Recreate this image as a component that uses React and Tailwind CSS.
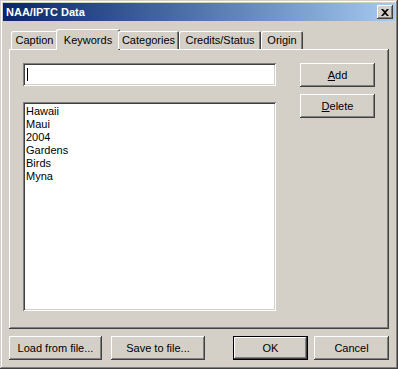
import React, { useState } from 'react';

const raised =
  'shadow-[inset_-1px_-1px_#404040,inset_1px_1px_#ffffff,inset_-2px_-2px_#808080,inset_2px_2px_#d4d0c8]';
const sunken =
  'shadow-[inset_1px_1px_#808080,inset_-1px_-1px_#ffffff,inset_2px_2px_#404040,inset_-2px_-2px_#d4d0c8]';

function Button({ children, className = '', isDefault = false }) {
  return (
    <button
      className={`h-[24px] w-[75px] bg-[#d4d0c8] text-[11px] text-black flex items-center justify-center ${
        isDefault
          ? 'border border-black shadow-[inset_-1px_-1px_#404040,inset_1px_1px_#ffffff,inset_-2px_-2px_#808080,inset_2px_2px_#d4d0c8]'
          : raised
      } ${className}`}
    >
      {children}
    </button>
  );
}

const tabs = [
  { name: 'Caption', w: 'w-[47px]' },
  { name: 'Keywords', w: 'w-[64px]' },
  { name: 'Categories', w: 'w-[61px]' },
  { name: 'Credits/Status', w: 'w-[82px]' },
  { name: 'Origin', w: 'w-[42px]' },
];

export default function App() {
  const [active] = useState('Keywords');
  const keywords = ['Hawaii', 'Maui', '2004', 'Gardens', 'Birds', 'Myna'];

  return (
    <div
      className="w-[398px] h-[369px] bg-[#d4d0c8] p-[3px] flex flex-col text-black shadow-[inset_-1px_-1px_#404040,inset_1px_1px_#d4d0c8,inset_-2px_-2px_#808080,inset_2px_2px_#ffffff]"
      style={{ fontFamily: '"Liberation Sans", Arial, sans-serif' }}
    >
      {/* title bar */}
      <div className="h-[18px] flex items-center justify-between pl-[3px] pr-[2px] bg-gradient-to-r from-[#0a246a] to-[#a6caf0]">
        <span className="text-[11px] font-bold text-white">NAA/IPTC Data</span>
        <button className={`w-[16px] h-[14px] bg-[#d4d0c8] flex items-center justify-center ${raised}`}>
          <svg width="8" height="7" viewBox="0 0 8 7">
            <path d="M0 0h2l2 2 2-2h2L5 3.5 8 7H6L4 5 2 7H0l3-3.5z" fill="#000" />
          </svg>
        </button>
      </div>

      {/* tabs */}
      <div className="mt-[8px] ml-[6px] mr-[6px] flex flex-col">
        <div className="flex items-end pl-[2px] h-[20px] relative z-10">
          {tabs.map((t) =>
            t.name === active ? (
              <div
                key={t.name}
                className={`${t.w} -mx-[2px] h-[21px] -mb-[1px] bg-[#d4d0c8] rounded-t-[2px] flex items-start justify-center pt-[3px] text-[11px] shadow-[inset_1px_1px_#ffffff,inset_-1px_0_#404040,inset_-2px_0_#808080]`}
              >
                {t.name}
              </div>
            ) : (
              <div
                key={t.name}
                className={`${t.w} h-[18px] bg-[#d4d0c8] rounded-t-[2px] flex items-center justify-center text-[11px] shadow-[inset_1px_1px_#ffffff,inset_-1px_0_#404040,inset_-2px_0_#808080]`}
              >
                {t.name}
              </div>
            )
          )}
        </div>

        {/* panel */}
        <div className="h-[280px] w-[380px] flex pt-[14px] pl-[14px] shadow-[inset_-1px_-1px_#404040,inset_1px_1px_#ffffff,inset_-2px_-2px_#808080]">
          <div className="w-[253px] flex flex-col">
            <div className={`h-[23px] bg-white flex items-center pl-[4px] ${sunken}`}>
              <span className="w-px h-[13px] bg-black" />
            </div>
            <div className={`mt-[16px] h-[209px] bg-white pt-[3px] pl-[3px] ${sunken}`}>
              {keywords.map((k) => (
                <div key={k} className="h-[13px] leading-[13px] text-[11px]">
                  {k}
                </div>
              ))}
            </div>
          </div>
          <div className="ml-[24px] flex flex-col gap-[7px]">
            <Button>
              <span>
                <u>A</u>dd
              </span>
            </Button>
            <Button>
              <span>
                <u>D</u>elete
              </span>
            </Button>
          </div>
        </div>

        {/* bottom buttons */}
        <div className="mt-[7px] flex">
          <Button className="w-[93px]">Load from file...</Button>
          <Button className="ml-[9px] w-[94px]">Save to file...</Button>
          <Button isDefault className="ml-[28px]">OK</Button>
          <Button className="ml-[6px]">Cancel</Button>
        </div>
      </div>
    </div>
  );
}
